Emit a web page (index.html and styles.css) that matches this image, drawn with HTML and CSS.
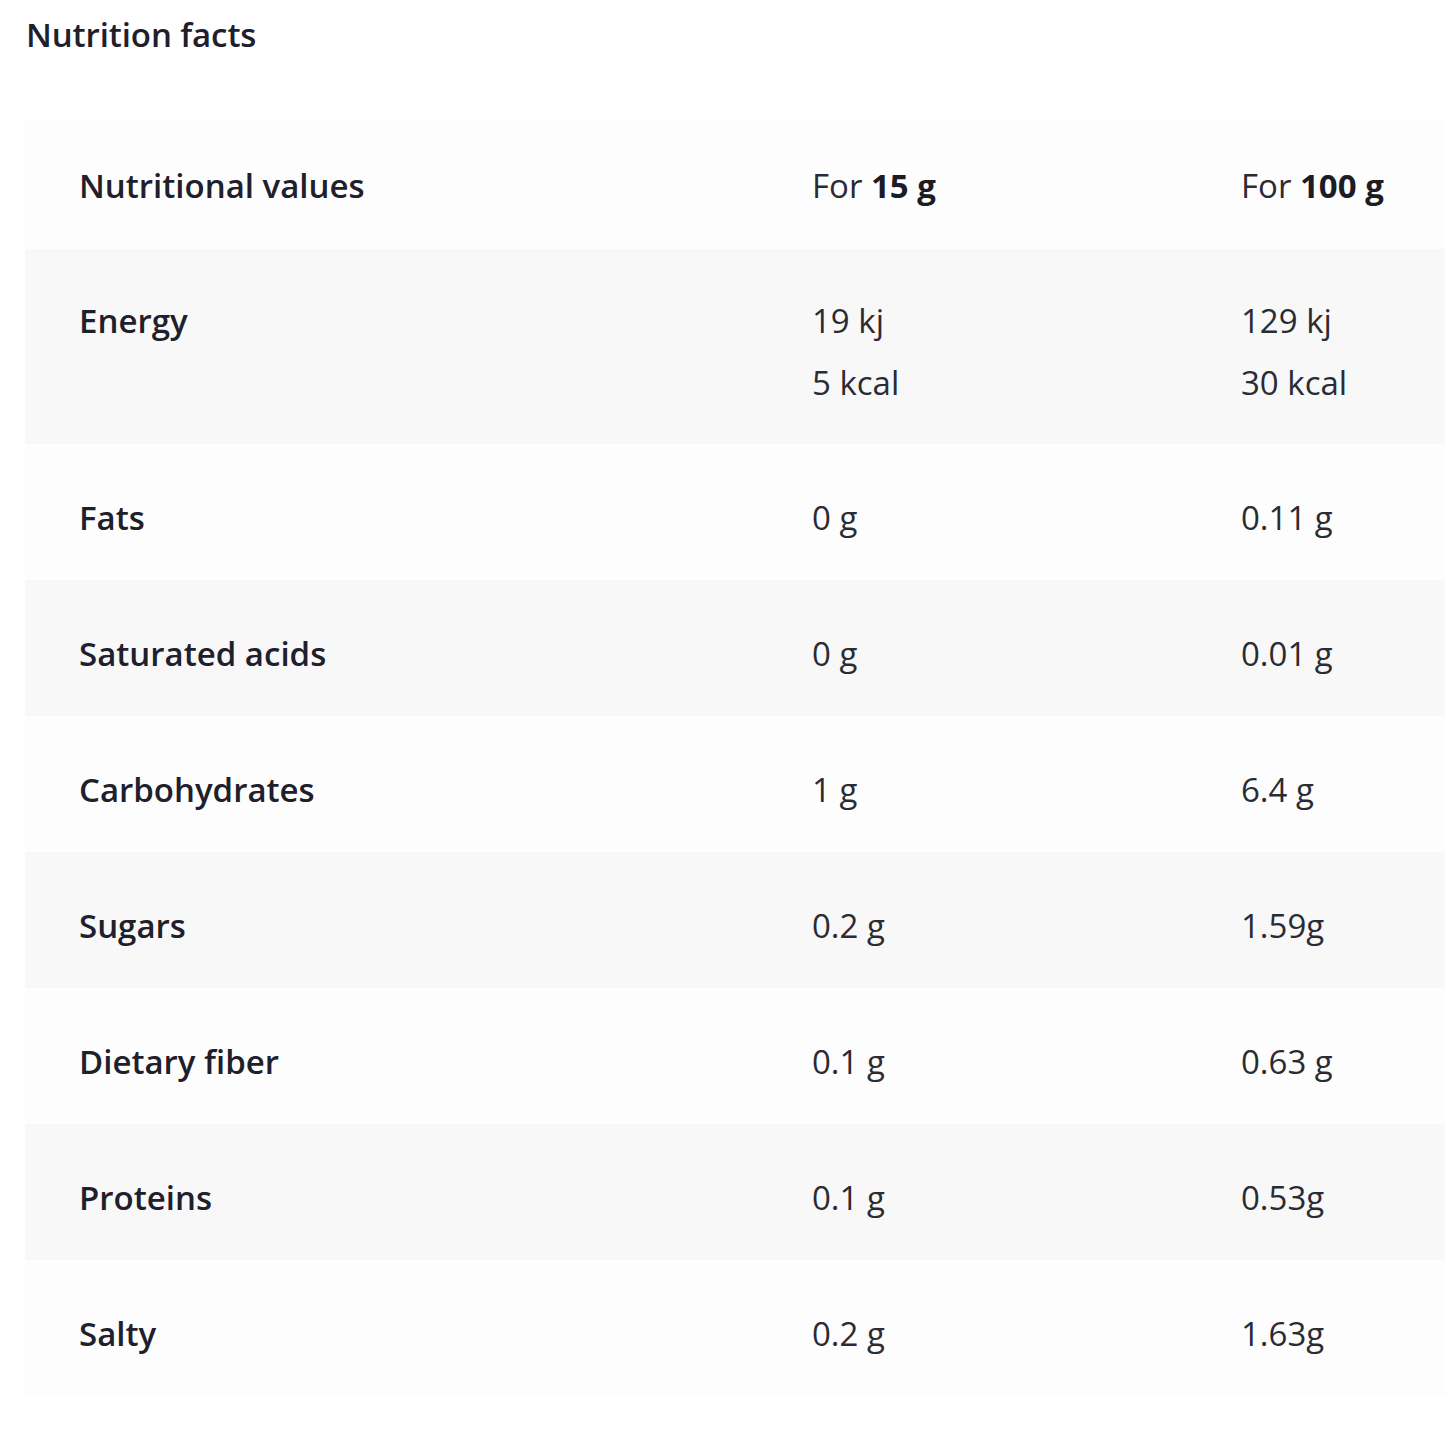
FILE: index.html
```html
<!DOCTYPE html>
<html lang="en">
<head>
<meta charset="utf-8">
<title>Nutrition facts</title>
<link rel="stylesheet" href="styles.css">
</head>
<body>
<section class="nutrition">
  <h2 class="nutrition__title">Nutrition facts</h2>
  <table class="facts">
    <colgroup>
      <col class="facts__col-label">
      <col class="facts__col-portion">
      <col class="facts__col-hundred">
    </colgroup>
    <thead>
      <tr class="facts__row facts__row--light facts__row--head">
        <th class="facts__label">Nutritional values</th>
        <th class="facts__value">For <b>15 g</b></th>
        <th class="facts__value">For <b>100 g</b></th>
      </tr>
    </thead>
    <tbody>
      <tr class="facts__row facts__row--dark facts__row--multi">
        <td class="facts__label">Energy</td>
        <td class="facts__value">19 kj<br>5 kcal</td>
        <td class="facts__value">129 kj<br>30 kcal</td>
      </tr>
      <tr class="facts__row facts__row--light">
        <td class="facts__label">Fats</td>
        <td class="facts__value">0 g</td>
        <td class="facts__value">0.11 g</td>
      </tr>
      <tr class="facts__row facts__row--dark">
        <td class="facts__label">Saturated acids</td>
        <td class="facts__value">0 g</td>
        <td class="facts__value">0.01 g</td>
      </tr>
      <tr class="facts__row facts__row--light">
        <td class="facts__label">Carbohydrates</td>
        <td class="facts__value">1 g</td>
        <td class="facts__value">6.4 g</td>
      </tr>
      <tr class="facts__row facts__row--dark">
        <td class="facts__label">Sugars</td>
        <td class="facts__value">0.2 g</td>
        <td class="facts__value">1.59g</td>
      </tr>
      <tr class="facts__row facts__row--light">
        <td class="facts__label">Dietary fiber</td>
        <td class="facts__value">0.1 g</td>
        <td class="facts__value">0.63 g</td>
      </tr>
      <tr class="facts__row facts__row--dark">
        <td class="facts__label">Proteins</td>
        <td class="facts__value">0.1 g</td>
        <td class="facts__value">0.53g</td>
      </tr>
      <tr class="facts__row facts__row--light">
        <td class="facts__label">Salty</td>
        <td class="facts__value">0.2 g</td>
        <td class="facts__value">1.63g</td>
      </tr>
    </tbody>
  </table>
</section>
</body>
</html>
```
FILE: styles.css
```css
html, body {
  margin: 0;
  padding: 0;
  background: #ffffff;
}

body {
  font-family: "Open Sans", "Noto Sans", sans-serif;
  color: #20202c;
}

.nutrition {
  padding: 12px 0 0 25px;
}

.nutrition__title {
  margin: 0 0 0 1px;
  font-size: 33px;
  line-height: 46px;
  font-weight: 600;
  letter-spacing: -0.1px;
  color: #20202c;
}

.facts {
  margin-top: 62px;
  width: 1420px;
  border-collapse: collapse;
  table-layout: fixed;
}

.facts__col-label { width: 787px; }
.facts__col-portion { width: 429px; }
.facts__col-hundred { width: auto; }

.facts__row--light { background: #fdfdfd; }
.facts__row--dark { background: #f8f8f8; }

.facts__label,
.facts__value {
  padding: 43px 0 31px;
  line-height: 62px;
  font-size: 33px;
  text-align: left;
  vertical-align: top;
  letter-spacing: 0;
}

.facts__row--head .facts__label,
.facts__row--head .facts__value {
  padding: 35px 0 32px;
}

.facts__row--multi .facts__label,
.facts__row--multi .facts__value {
  padding: 41px 0 30px;
}

.facts__label {
  font-weight: 600;
  color: #20202c;
}

.facts__row .facts__label {
  padding-left: 54px;
}

.facts__value {
  font-weight: 400;
  color: #2b2b33;
}

.facts__value b {
  font-weight: 700;
  color: #1c1c24;
}
```
